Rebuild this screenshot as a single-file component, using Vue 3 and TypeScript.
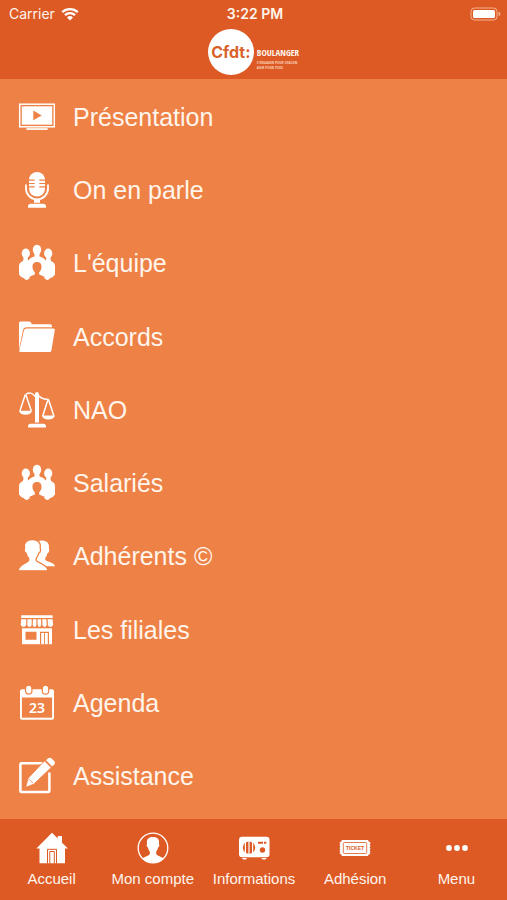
<script setup lang="ts">
type IconName = 'tv' | 'mic' | 'team' | 'folder' | 'scales' | 'people' | 'shop' | 'calendar' | 'edit'
type TabIcon = 'home' | 'account' | 'radio' | 'ticket' | 'more'

const entries: { id: string; label: string; icon: IconName }[] = [
  { id: 'presentation', label: 'Présentation', icon: 'tv' },
  { id: 'on-en-parle', label: 'On en parle', icon: 'mic' },
  { id: 'equipe', label: "L'équipe", icon: 'team' },
  { id: 'accords', label: 'Accords', icon: 'folder' },
  { id: 'nao', label: 'NAO', icon: 'scales' },
  { id: 'salaries', label: 'Salariés', icon: 'team' },
  { id: 'adherents', label: 'Adhérents ©', icon: 'people' },
  { id: 'filiales', label: 'Les filiales', icon: 'shop' },
  { id: 'agenda', label: 'Agenda', icon: 'calendar' },
  { id: 'assistance', label: 'Assistance', icon: 'edit' },
]

const tabs: { id: string; label: string; icon: TabIcon }[] = [
  { id: 'accueil', label: 'Accueil', icon: 'home' },
  { id: 'compte', label: 'Mon compte', icon: 'account' },
  { id: 'informations', label: 'Informations', icon: 'radio' },
  { id: 'adhesion', label: 'Adhésion', icon: 'ticket' },
  { id: 'menu', label: 'Menu', icon: 'more' },
]
</script>

<template>
  <div class="app">
    <header class="top">
      <div class="status">
        <div class="carrier">
          <span>Carrier</span>
          <svg class="wifi" viewBox="0 0 18 14" aria-hidden="true">
            <path d="M1.2 5.2a11.2 11.2 0 0 1 15.6 0M4 8.1a7.2 7.2 0 0 1 10 0" fill="none" stroke="#fff" stroke-width="2.3" />
            <path d="M9 13.6 6 10.5a4.3 4.3 0 0 1 6 0z" fill="#fff" />
          </svg>
        </div>
        <time class="clock">3:22 PM</time>
        <svg class="battery" viewBox="0 0 31 14" aria-hidden="true">
          <rect x="1" y="1" width="26" height="12" rx="3.5" fill="none" stroke="#f3b28f" />
          <rect x="3" y="3" width="22" height="8" rx="1.5" fill="#fff" />
          <path d="M28.5 4.8q2 .6 2 2.2t-2 2.2z" fill="#f3b28f" />
        </svg>
      </div>
      <div class="brand">
        <span class="disc">Cfdt:</span>
        <div class="brand-text">
          <strong>BOULANGER</strong>
          <small>S'ENGAGER POUR CHACUN<br />AGIR POUR TOUS</small>
        </div>
      </div>
    </header>

    <main class="content">
      <ul class="list">
        <li v-for="entry in entries" :key="entry.id">
          <a class="entry" :href="'#' + entry.id">
            <svg class="icon" viewBox="0 0 36 36" aria-hidden="true">
              <g v-if="entry.icon === 'tv'">
                <rect x=".7" y="5.2" width="34.6" height="22.6" fill="none" stroke="#fff" stroke-width="1.5" />
                <path d="M2.8 7.3h30.4v18.4H2.8z" />
                <path class="cut" d="M14.3 11.6v9.6l8.4-4.8z" />
                <path d="M7.5 29.2h21.2v1.7H7.5z" />
              </g>
              <g v-else-if="entry.icon === 'mic'">
                <rect x="10" y="0" width="16" height="24.5" rx="8" />
                <path class="cut-line" d="M9.5 8.1h6.2M20.3 8.1h6.2M9.5 11.5h6.2M20.3 11.5h6.2M9.5 14.8h6.2M20.3 14.8h6.2" stroke-width="1.2" />
                <path d="M7 12.5v4.3a11 10.5 0 0 0 22 0v-4.3" fill="none" stroke="#fff" stroke-width="1.8" />
                <path d="M15 27h6v3.8h-6zM9 35.7v-1.2q0-2.8 3-2.8h12q3 0 3 2.8v1.2z" />
              </g>
              <g v-else-if="entry.icon === 'team'">
                <ellipse cx="18" cy="4.700" rx="4.200" ry="4.900" />
                <ellipse cx="6.800" cy="8.400" rx="4.100" ry="4.800" />
                <ellipse cx="29.200" cy="8.400" rx="4.100" ry="4.800" />
                <path d="M15.500 8h5v3.400q5 1.500 6 4 .700-.300.700-1.400v-3.200h4.400v3.700q0 1.500 2.100 2.500Q36 18.200 36 21v8.500q-1.500 2.600-5 3.800-1 1.900-3.300 1.700-1-.8-1.700-1.500H10q-.7.700-1.700 1.500-2.300.2-3.300-1.700-3.500-1.200-5-3.800V21q0-2.800 2.300-4 2.100-1 2.100-2.500v-3.700h4.400v3.200q0 1.100.7 1.400 1-2.500 6-4z" />
                <path class="cut" d="M18 17c3.300 0 4.700 2.300 4.500 5-.1 2.600-1.200 4.200-2.300 5.200v2.200l5.300 2.300L25 36H11l-.5-4.300 5.300-2.300v-2.200c-1.100-1-2.200-2.600-2.300-5.200-.2-2.700 1.200-5 4.500-5z" />
              </g>
              <g v-else-if="entry.icon === 'folder'">
                <path d="M0 30.500V4q0-1.600 1.600-1.600h8.600q1.500 0 2.100 1.700l.4 1.200H31q2 0 2 2v1H7.200q-2.500 0-3.100 2.500z" />
                <path d="M7.500 9.500h27q1.600 0 1.300 1.600L32.400 31.400q-.3 1.600-1.900 1.600H1.300Q0 33 .3 31.500l4.600-20q.5-2 2.600-2z" />
              </g>
              <g v-else-if="entry.icon === 'scales'">
                <circle cx="17.900" cy="1.900" r="1.900" />
                <path d="M16 2h4v28.500h-4zM9 35.500v-1.200q0-2.600 2.600-2.600h12.800q2.600 0 2.600 2.600v1.200z" />
                <path d="M16.200 4.500C13 .5 10.800.3 7 2.200M19.800 3.800c3 3.800 5.600 3.300 10 3.600M6.300 2.600.9 19M6.800 2.600 12.300 19M29 7.500l-5.200 16.200M29.500 7.500l5.300 16.200" fill="none" stroke="#fff" stroke-width="1.5" />
                <path d="M0 18.700h13c-.5 2.600-3 4.100-6.500 4.100S.5 21.300 0 18.700zM22.900 23.400h13c-.5 2.600-3 4.100-6.500 4.100s-6-1.500-6.500-4.100z" />
              </g>
              <g v-else-if="entry.icon === 'people'">
                <path d="M17 4q2.400-1.700 6-1.600c5.400.1 7.600 3.500 6.900 7.800.9 2.400-.1 4.700-1.600 5.300-.4 2.400-1.200 3.600-2.100 4.500v1.800c1.200 2.300 9 2.400 9.900 6.500H20L17 20z" />
                <path d="M13.300 1.500C19 1.500 22 4.800 21.200 9.700c1 2.300.1 5-1.500 5.500-.4 2.300-1.400 4.100-2.500 5v2.300c1.300 2.500 11 3.500 12 10.300H-1c.8-6.800 9.200-7.800 10.700-10.300v-2.300c-1.100-.9-2.200-2.700-2.600-5-1.700-.5-2.500-3.200-1.500-5.500-.9-4.900 2-8.200 7.700-8.200z" stroke="#ee8145" stroke-width="1.300" />
              </g>
              <g v-else-if="entry.icon === 'shop'">
                <path d="M2.200 3.300h31.400v2.800H2.200zM2.200 7.300h5v5.600q-1 2-2.700 2T1.800 13zM8.500 7.300h4.200v5.600q-.7 2-2.200 2t-2.200-2zM14 7.300h3.400V13q-.6 1.900-1.900 1.900T13.700 13zM18.600 7.300H22l.2 5.700q-.6 1.900-1.800 1.900T18.600 13zM23.300 7.300h4.100l.3 5.700q-.6 1.900-2.100 1.900t-2.200-2zM28.700 7.300h4.900l.5 5.700q-1 1.900-2.700 1.900T28.900 13z" />
                <path d="M3 16.300h30v15.900H3z" />
                <path class="cut" d="M6.500 19.800h11v8h-11zM21 19.800h9v12.400h-1.200V21h-6.600v11.200H21z" />
                <path class="cut" d="M25 21h.9v11.200H25z" />
              </g>
              <g v-else-if="entry.icon === 'calendar'">
                <path d="M3 4.200h30q2 0 2 2v26.500q0 2-2 2H3q-2 0-2-2V6.200q0-2 2-2z" />
                <path class="cut" d="M2.900 12.500h30.200v20.200H2.900z" />
                <rect x="6.500" y=".2" width="6.400" height="9" rx="3.200" stroke="#ee8145" stroke-width="1.200" />
                <rect x="23.300" y=".2" width="6.400" height="9" rx="3.200" stroke="#ee8145" stroke-width="1.200" />
                <text class="day" x="18" y="28" text-anchor="middle">23</text>
              </g>
              <g v-else>
                <path d="M23.500 5.200H2.500Q1.400 5.200 1.400 6.300V33q0 1.100 1.100 1.100h26.800q1.100 0 1.100-1.100V14.500" fill="none" stroke="#fff" stroke-width="2.500" />
                <path d="M25.500 2.900 32.200 9.500 14.700 26.200 6.700 29.300 9.300 20z" stroke="#ee8145" stroke-width=".8" />
                <path d="M27 2.300 28.900.5q1.700-1.400 3.600 0l2.700 2.600q1.500 1.700 0 3.500l-1.900 1.800z" />
                <path class="cut-line" d="M10.200 21.300l3.700 3.700" stroke-width=".8" />
              </g>
            </svg>
            <span>{{ entry.label }}</span>
          </a>
        </li>
      </ul>
    </main>

    <nav class="tabs">
      <a v-for="tab in tabs" :key="tab.id" class="tab" :href="'#' + tab.id">
        <svg class="tab-icon" viewBox="0 0 32 32" aria-hidden="true">
          <g v-if="tab.icon === 'home'">
            <path d="M16 .8 21.800 6.500V4h4.200v6.700l6 5.900H29V31.300H3.500V16.600H.4z" />
            <path d="M11.500 31.300V17.300h9v14M13.800 31.300V19.500h4.500v11.800" fill="none" stroke="#dd5a25" stroke-width="1" />
          </g>
          <g v-else-if="tab.icon === 'account'">
            <circle cx="16" cy="16" r="14.800" fill="none" stroke="#fff" stroke-width="1.300" />
            <path d="M16 5c4.700 0 6.600 2.700 6 6.400.8 1.700.1 3.600-1 4-.3 1.900-1 3.100-1.800 4v2.700c1 2 5.100 2.400 7.300 4.500A14.800 14.800 0 0 1 5.500 26.600c2.200-2.100 6.300-2.500 7.300-4.500v-2.700c-.8-.9-1.500-2.100-1.800-4-1.100-.4-1.800-2.300-1-4C9.400 7.700 11.300 5 16 5z" />
          </g>
          <g v-else-if="tab.icon === 'radio'">
            <path d="M4 4.800h24.500q3 0 3 3v14.500q0 3-3 3H4q-3 0-3-3V7.800q0-3 3-3z" />
            <path d="M4 26h5l-1 1.500H5zM23.500 26h5l-1 1.500h-3z" />
            <circle class="bar" cx="11" cy="15.700" r="6.200" />
            <path d="M7.400 8v15M11 8v15M14.600 8v15" fill="none" stroke="#fff" stroke-width="1.200" />
            <circle class="bar" cx="24.500" cy="18" r="2.700" />
            <path class="bar" d="M20 9.700h5v2h-5zM26 9.700h2.300v2H26z" />
          </g>
          <g v-else-if="tab.icon === 'ticket'">
            <path d="M3 8h26q.2 2 2.300 2.300v1.500l-.8.700.8.700v1.300l-.8.700.8.700v1.400l-.8.700.8.700v1.300l-.8.700.8.700v.7Q29.200 22 29 24H3q-.2-2-2.300-2.300V21l.8-.7-.8-.7v-1.300l.8-.7-.8-.7v-1.400l.8-.7-.8-.7v-1.300l.8-.7-.8-.7v-1Q2.800 10 3 8z" />
            <rect x="4.300" y="10.500" width="23.400" height="11" rx="1" fill="none" stroke="#dd5a25" stroke-width=".8" />
            <text class="ticket" x="16" y="18" text-anchor="middle">TICKET</text>
          </g>
          <g v-else>
            <circle cx="9" cy="16" r="2.900" />
            <circle cx="17" cy="16" r="2.900" />
            <circle cx="25" cy="16" r="2.900" />
          </g>
        </svg>
        <span>{{ tab.label }}</span>
      </a>
    </nav>
  </div>
</template>

<style>
body {
  margin: 0;
  background: #ee8145;
}
</style>

<style scoped>
.app {
  display: flex;
  flex-direction: column;
  min-height: 100vh;
  background: #ee8145;
  color: #fff5ec;
  font-family: "Liberation Sans", Arial, sans-serif;
}

a {
  color: inherit;
  text-decoration: none;
}

svg {
  display: block;
  fill: #fff;
  overflow: visible;
  flex: none;
}

.top {
  background: #dd5a25;
  padding-bottom: 4px;
}

.status {
  display: grid;
  grid-template-columns: 1fr auto 1fr;
  align-items: center;
  height: 28px;
  padding: 0 6px 0 9px;
  font-family: Inter, sans-serif;
  font-size: 14px;
  line-height: 18px;
}

.carrier {
  display: flex;
  align-items: center;
  gap: 6px;
}

.wifi {
  width: 18px;
  height: 14px;
}

.clock {
  font-weight: 600;
}

.battery {
  width: 31px;
  height: 14px;
  justify-self: end;
}

.brand {
  display: flex;
  justify-content: center;
  align-items: center;
  gap: 3px;
  padding-top: 1px;
}

.disc {
  display: flex;
  align-items: center;
  justify-content: center;
  width: 46px;
  height: 46px;
  border-radius: 50%;
  background: #fff;
  color: #d9622b;
  font-family: Inter, sans-serif;
  font-size: 16px;
  font-weight: 700;
  line-height: 20px;
}

.brand-text {
  display: flex;
  flex-direction: column;
  gap: 2px;
  padding-top: 14px;
  white-space: nowrap;
}

.brand-text strong {
  font-family: "Open Sans Condensed", "Liberation Sans Narrow", "Open Sans", sans-serif;
  font-size: 9px;
  line-height: 10px;
}

.brand-text small {
  font-family: "Open Sans Condensed", "Liberation Sans Narrow", "Open Sans", sans-serif;
  font-size: 4px;
  line-height: 5px;
  color: #f9cdb4;
}

.content {
  flex: 1;
  display: flex;
}

.list {
  flex: 1;
  display: grid;
  grid-auto-rows: 1fr;
  margin: 0;
  padding: 1px 0 6px;
  list-style: none;
}

.list li {
  display: flex;
}

.entry {
  flex: 1;
  display: flex;
  align-items: center;
  gap: 18px;
  padding: 0 19px;
  font-size: 25px;
  line-height: 30px;
}

.icon {
  width: 36px;
  height: 36px;
}

.cut {
  fill: #ee8145;
}

.cut-line {
  fill: none;
  stroke: #ee8145;
}

.day {
  font-family: "Noto Sans", sans-serif;
  font-size: 14px;
  font-weight: 600;
}

.tabs {
  display: grid;
  grid-template-columns: repeat(5, 1fr);
  padding: 13px 0 12px 1px;
  background: #dd5a25;
}

.tab {
  display: flex;
  flex-direction: column;
  align-items: center;
  gap: 6px;
  font-size: 15px;
  line-height: 18px;
  white-space: nowrap;
}

.tab-icon {
  width: 32px;
  height: 32px;
}

.bar {
  fill: #dd5a25;
}

.ticket {
  font-family: "Liberation Sans", sans-serif;
  font-size: 5px;
  font-weight: 700;
  fill: #dd5a25;
}
</style>
